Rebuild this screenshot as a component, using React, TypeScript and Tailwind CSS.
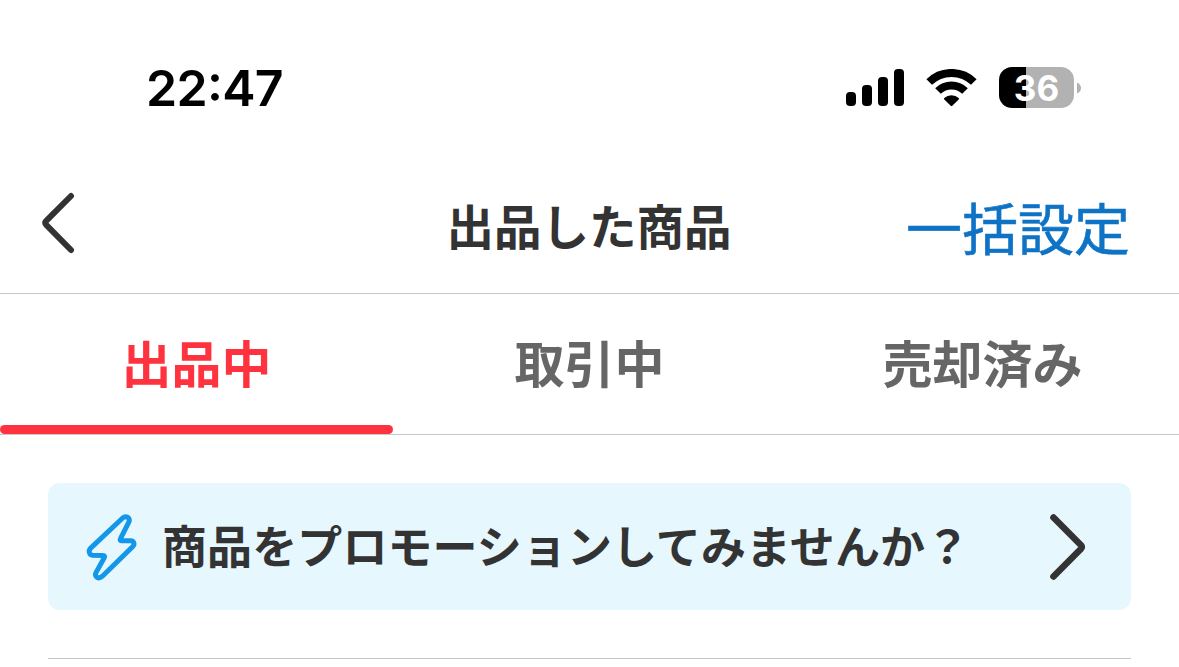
const tabs = [
  { label: '出品中', active: true },
  { label: '取引中', active: false },
  { label: '売却済み', active: false },
]

function StatusBar() {
  return (
    <div className="flex h-[155px] items-start justify-between pl-[146px] pr-[98px] text-black">
      <time className="mt-[58px] font-['Inter',sans-serif] text-[50px] font-semibold leading-[60px] tracking-[-0.7px] [font-feature-settings:'case']">
        22:47
      </time>
      <div className="mt-[67px] flex h-[41px] items-center">
        <div className="flex h-[37px] items-end gap-[6px]">
          <span className="h-[14px] w-[10px] rounded-[4px] bg-black" />
          <span className="h-[21px] w-[10px] rounded-[4px] bg-black" />
          <span className="h-[29px] w-[10px] rounded-[4px] bg-black" />
          <span className="h-[37px] w-[10px] rounded-[4px] bg-black" />
        </div>
        <svg className="ml-[22px] h-[38px] w-[51px]" viewBox="0 0 51 38" fill="none">
          <path d="M3.2 13A32 32 0 0 1 47.8 13" stroke="#000" strokeWidth="8" />
          <path d="M12 22A19.3 19.3 0 0 1 39 22" stroke="#000" strokeWidth="8" />
          <path
            d="M18.3 29.1A10.4 10.4 0 0 1 32.7 29.1Q33.3 29.8 32.7 30.4L26.3 36.8Q25.5 37.6 24.7 36.8L18.3 30.4Q17.7 29.8 18.3 29.1Z"
            fill="#000"
          />
        </svg>
        <div className="ml-[22px] flex items-center gap-[3px]">
          <div className="flex h-[41px] w-[75px] items-center justify-center rounded-[13px] bg-[linear-gradient(to_right,#000_27px,#b2b2b2_27px)] pt-[2px] font-['Inter',sans-serif] text-[35px] font-bold leading-none text-white">
            36
          </div>
          <svg className="h-[12px] w-[4px]" viewBox="0 0 4 12">
            <path d="M0 0.5Q4 2.5 4 6T0 11.5Z" fill="#b2b2b2" />
          </svg>
        </div>
      </div>
    </div>
  )
}

function Header() {
  return (
    <header className="grid h-[139px] grid-cols-[1fr_auto_1fr] items-center border-b border-[#c8c8c8] pl-[41px] pr-[49px]">
      <button aria-label="戻る">
        <svg className="mb-[2px] h-[62px] w-[34px]" viewBox="0 0 34 62" fill="none">
          <path
            d="M30 4L5.2 28.8Q3.4 30.8 5.2 32.8L30 58"
            stroke="#333"
            strokeWidth="6"
            strokeLinecap="round"
            strokeLinejoin="round"
          />
        </svg>
      </button>
      <h1 className="pl-[7px] pt-px text-[47.5px] font-bold leading-[60px] text-[#333]">
        出品した商品
      </h1>
      <button className="justify-self-end pt-[4px] text-[56px] leading-[70px] text-[#0f73c5] [-webkit-text-stroke:0.6px_#0f73c5]">
        一括設定
      </button>
    </header>
  )
}

function Tabs() {
  return (
    <nav className="grid h-[141px] grid-cols-3 border-b border-[#c8c8c8]">
      {tabs.map((tab) => (
        <button
          key={tab.label}
          className={`flex flex-col items-center text-[50px] font-bold ${
            tab.active ? 'text-[#ff333f]' : 'text-[#666]'
          }`}
        >
          <span className="flex h-[131px] items-center pt-[3px]">{tab.label}</span>
          {tab.active && <span className="h-[9px] w-full rounded-full bg-[#ff333f]" />}
        </button>
      ))}
    </nav>
  )
}

function PromotionBanner() {
  return (
    <button className="flex h-[127px] w-full items-center rounded-[12px] bg-[#e6f7fe] pl-[36px] pr-[45px]">
      <svg className="h-[70px] w-[56px]" viewBox="0 0 56 70" fill="none">
        <path
          d="M6.4 36.4L38.4 6.2C42.2 2.8 46.6 6 44.8 10.2L36.6 26.4Q35.4 28.8 38 28.8L46.8 28.8C50 28.8 51 32.4 48.8 34.6L18.4 64.2C14.4 67.8 10.2 64.8 12 60.6L20.2 45.8Q21.4 43.4 18.8 43.4L8.4 43.2C5.2 43 4.2 38.8 6.4 36.4Z"
          stroke="#1297ea"
          strokeWidth="5"
          strokeLinejoin="round"
        />
      </svg>
      <span className="mb-[3px] ml-[22px] whitespace-nowrap text-[45px] font-bold leading-[60px] tracking-[0.1px] text-[#333]">
        商品をプロモーションしてみませんか？
      </span>
      <svg className="ml-auto h-[68px] w-[37px]" viewBox="0 0 37 68" fill="none">
        <path
          d="M4.5 4.5L31.8 32Q33.6 34 31.8 36L4.5 63.5"
          stroke="#333"
          strokeWidth="6.6"
          strokeLinecap="round"
          strokeLinejoin="round"
        />
      </svg>
    </button>
  )
}

export default function App() {
  return (
    <div className="h-[667px] w-[1179px] overflow-hidden bg-white font-['Noto_Sans_CJK_JP',sans-serif]">
      <StatusBar />
      <Header />
      <Tabs />
      <main className="px-12 pt-12">
        <PromotionBanner />
        <div className="mt-12 border-t border-[#c4c4c4]" />
      </main>
    </div>
  )
}
